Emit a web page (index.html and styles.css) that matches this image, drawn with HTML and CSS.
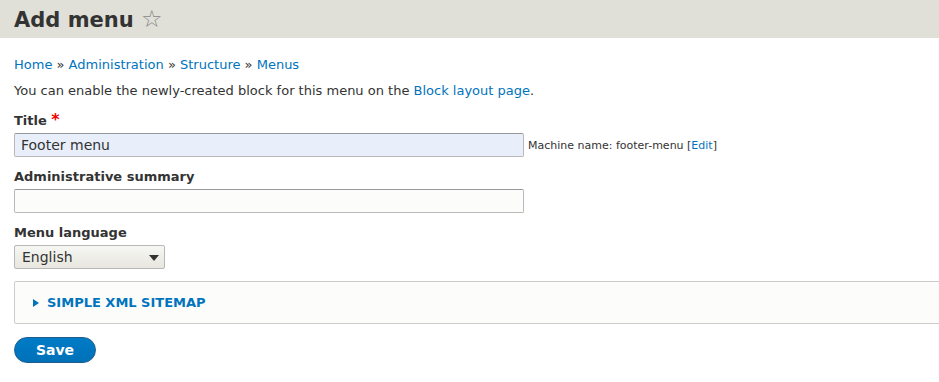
FILE: index.html
```html
<!DOCTYPE html>
<html lang="en">
<head>
    <meta charset="UTF-8">
    <title>Add menu</title>
    <link rel="stylesheet" href="styles.css">
</head>
<body>
    <!-- Page header -->
    <header class="page-header">
        <h1 class="page-title">Add menu <span class="shortcut">&#9734;</span></h1>
    </header>

    <main class="content">
        <nav class="breadcrumb">
            <a href="#">Home</a> &raquo; <a href="#">Administration</a> &raquo; <a href="#">Structure</a> &raquo; <a href="#">Menus</a>
        </nav>
        <p class="help">You can enable the newly-created block for this menu on the <a href="#">Block layout page</a>.</p>

        <form class="menu-form">
            <div class="form-item">
                <label class="form-label">Title <span class="required">*</span></label>
                <div class="inline-row">
                    <input class="form-text focused" type="text" value="Footer menu">
                    <span class="machine-name">Machine name: footer-menu [<a href="#">Edit</a>]</span>
                </div>
            </div>

            <div class="form-item">
                <label class="form-label">Administrative summary</label>
                <input class="form-text" type="text">
            </div>

            <div class="form-item">
                <label class="form-label">Menu language</label>
                <div class="form-select">English <span class="arrow"></span></div>
            </div>

            <div class="details">
                <span class="summary"><span class="marker"></span>Simple XML Sitemap</span>
            </div>

            <button class="button-primary" type="button">Save</button>
        </form>
    </main>
</body>
</html>
```

FILE: styles.css
```css
body {
    margin: 0;
    font-family: "DejaVu Sans", Verdana, sans-serif;
    font-size: 13px;
    color: #333;
    background: #fff;
    overflow: hidden;
}

a {
    color: #0074bd;
    text-decoration: none;
}

/* Header */
.page-header {
    background: #e0e0d8;
    height: 38px;
    padding: 0 14px;
    box-sizing: border-box;
}

.page-title {
    margin: 0;
    font-size: 21px;
    line-height: 38px;
    font-weight: bold;
    color: #333;
}

.shortcut {
    font-weight: normal;
    color: #888;
    font-size: 24px;
}

/* Content */
.content {
    padding: 19px 14px 0;
}

.breadcrumb {
    line-height: 16px;
    margin: 0 0 10px;
}

.help {
    margin: 0 0 13px;
    line-height: 16px;
}

.form-item {
    margin-bottom: 12px;
}

.form-label {
    display: block;
    font-weight: bold;
    line-height: 16px;
    margin-bottom: 4px;
}

.required {
    color: #e00;
    font-size: 16px;
}

.inline-row {
    display: flex;
    align-items: center;
    gap: 4px;
}

.form-text {
    display: block;
    width: 510px;
    height: 24px;
    box-sizing: border-box;
    border: 1px solid #b8b8b8;
    border-top-color: #999;
    border-radius: 2px;
    background: #fcfcfa;
    font-family: inherit;
    font-size: 14px;
    padding: 0 6px;
    color: #333;
}

.form-text.focused {
    background: #e8effa;
}

.machine-name {
    font-size: 11px;
    color: #333;
}

.form-select {
    position: relative;
    width: 151px;
    height: 24px;
    box-sizing: border-box;
    border: 1px solid #b8b8b8;
    border-radius: 2px;
    background: linear-gradient(#f6f6f3, #e7e7df);
    font-size: 14px;
    line-height: 22px;
    padding-left: 7px;
}

.arrow {
    position: absolute;
    right: 5px;
    top: 9px;
    border-left: 5px solid transparent;
    border-right: 5px solid transparent;
    border-top: 6px solid #333;
}

/* Collapsible section */
.details {
    margin: 12px -40px 13px 0;
    height: 43px;
    box-sizing: border-box;
    border: 1px solid #ccc;
    border-radius: 2px;
    background: #fcfcfa;
    display: flex;
    align-items: center;
    padding-left: 18px;
}

.summary {
    display: flex;
    align-items: center;
    color: #0074bd;
    font-weight: bold;
    text-transform: uppercase;
    font-size: 13px;
}

.marker {
    border-top: 4px solid transparent;
    border-bottom: 4px solid transparent;
    border-left: 6px solid #0074bd;
    margin-right: 8px;
}

.button-primary {
    width: 82px;
    height: 26px;
    border: 1px solid #1e5c90;
    border-radius: 20em;
    background: linear-gradient(#007bc6, #0071b8);
    color: #fff;
    font-family: inherit;
    font-weight: bold;
    font-size: 14px;
    padding: 0;
}
```
